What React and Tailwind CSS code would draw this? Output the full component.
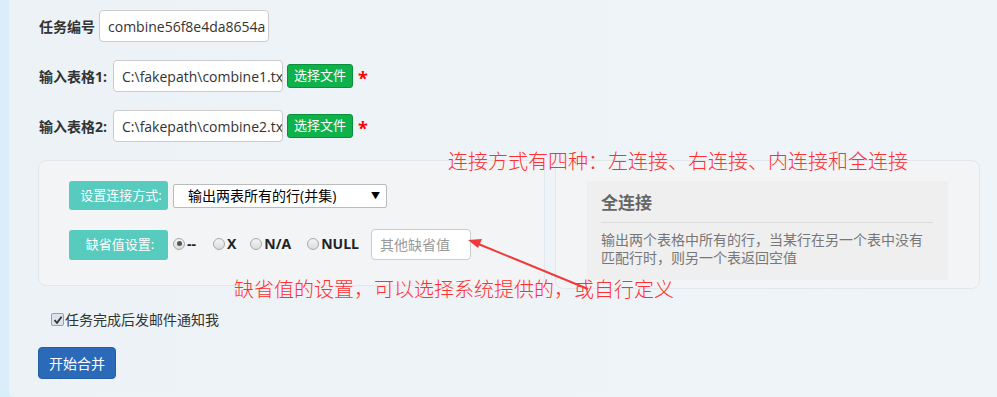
import React from 'react';

const font = { fontFamily: '"Open Sans", "Noto Sans CJK SC", sans-serif' };

function FileRow({ label, value }) {
  return (
    <div className="flex items-center h-[32px]">
      <span className="w-[74px] text-[14px] font-bold text-[#333]">{label}</span>
      <input
        readOnly
        value={value}
        className="w-[170px] h-[32px] bg-white border border-[#ccc] rounded-[4px] pl-[8px] text-[14px] text-[#333] outline-none"
      />
      <button className="ml-[4px] w-[66px] h-[24px] bg-[#0fb24a] border border-[#0a8f3a] rounded-[3px] text-white text-[13px] flex items-center justify-center">
        选择文件
      </button>
      <span className="ml-[5px] text-[#f00] text-[18px] font-bold leading-none mt-[4px]">*</span>
    </div>
  );
}

function Radio({ label, checked, className }) {
  return (
    <label className={`flex items-center ${className || ''}`}>
      <span className="w-[12px] h-[12px] rounded-full border border-[#a9a9a9] bg-gradient-to-b from-[#f4f4f4] to-[#dcdcdc] flex items-center justify-center">
        {checked && <span className="w-[5px] h-[5px] rounded-full bg-[#555]" />}
      </span>
      <span className="ml-[2px] text-[14px] font-bold text-[#222]">{label}</span>
    </label>
  );
}

export default function App() {
  return (
    <div className="w-[997px] h-[397px] flex bg-[#d9eef9] relative overflow-hidden" style={font}>
      <div className="w-[9px] shrink-0" />
      <div className="flex-1 bg-gradient-to-r from-[#edf2f6] to-[#eef4f8] rounded-bl-[6px] pl-[30px] pt-[10px]">
        <div className="flex items-center h-[32px]">
          <span className="w-[60px] text-[14px] font-bold text-[#333]">任务编号</span>
          <input
            readOnly
            value="combine56f8e4da8654a"
            className="w-[170px] h-[32px] bg-white border border-[#ccc] rounded-[4px] pl-[8px] text-[14px] text-[#333] outline-none"
          />
        </div>
        <div className="mt-[18px]">
          <FileRow label="输入表格1:" value="C:\fakepath\combine1.txt" />
        </div>
        <div className="mt-[18px]">
          <FileRow label="输入表格2:" value="C:\fakepath\combine2.txt" />
        </div>

        <div className="mt-[18px] -ml-[1px] flex gap-[10px]">
          <div className="w-[507px] h-[126px] border border-[#e2e7eb] rounded-[8px] bg-[#f2f4f6] pl-[30px] pt-[20px]">
            <div className="flex items-center">
              <div className="w-[99px] h-[29px] bg-[#56cbbe] rounded-[3px] text-white text-[13px] flex items-center justify-center pl-[5px]">
                设置连接方式:
              </div>
              <div className="ml-[5px] w-[214px] h-[24px] bg-white border border-[#bbb] rounded-[2px] flex items-center justify-between pl-[14px] pr-[6px] text-[14px] text-black">
                <span>输出两表所有的行(并集)</span>
                <span className="text-[9px]">▼</span>
              </div>
            </div>
            <div className="flex items-center mt-[19px]">
              <div className="w-[99px] h-[30px] bg-[#56cbbe] rounded-[3px] text-white text-[13px] flex items-center justify-center pl-[3px]">
                缺省值设置:
              </div>
              <div className="ml-[5px] flex items-center -mt-[2px]">
                <Radio label="--" checked />
                <Radio label="X" className="ml-[17px]" />
                <Radio label="N/A" className="ml-[14px]" />
                <Radio label="NULL" className="ml-[16px]" />
              </div>
              <div className="ml-[12px] w-[100px] h-[31px] bg-white border border-[#ccc] rounded-[4px] pl-[8px] flex items-center text-[14px] text-[#999]">
                其他缺省值
              </div>
            </div>
          </div>
          <div className="w-[425px] h-[129px] border border-[#e2e7eb] rounded-[8px] bg-[#f2f4f6] pl-[31px] pt-[20px]">
            <div className="w-[361px] h-[99px] bg-[#efefef] px-[14px] pt-[10px]">
              <div className="text-[17px] font-bold text-[#666] leading-[24px]">全连接</div>
              <div className="mt-[7px] border-t border-[#dcdcdc] w-[332px]" />
              <div className="mt-[8px] text-[14px] text-[#777] leading-[18px] whitespace-nowrap">
                <div>输出两个表格中所有的行，当某行在另一个表中没有</div>
                <div>匹配行时，则另一个表返回空值</div>
              </div>
            </div>
          </div>
        </div>

        <div className="mt-[20px] ml-[12px] flex items-center">
          <span className="w-[13px] h-[13px] border border-[#7aa7d8] rounded-[2px] bg-[#dde3ea] flex items-center justify-center">
            <svg width="10" height="10" viewBox="0 0 10 10">
              <path d="M1.5 5.2 L4 7.8 L8.6 1.8" stroke="#333" strokeWidth="1.8" fill="none" />
            </svg>
          </span>
          <span className="ml-[1px] text-[14px] text-[#333]">任务完成后发邮件通知我</span>
        </div>

        <button className="mt-[17px] -ml-[1px] w-[78px] h-[32px] bg-[#2a6ab8] border border-[#245ea5] rounded-[4px] text-white text-[14px]">
          开始合并
        </button>
      </div>

      <div className="absolute left-[448px] top-[148px] text-[20px] font-light text-[#ff3030] leading-[28px] whitespace-nowrap">
        连接方式有四种：左连接、右连接、内连接和全连接
      </div>
      <div className="absolute left-[234px] top-[276px] text-[20px] font-light text-[#ff3030] leading-[28px] whitespace-nowrap">
        缺省值的设置，可以选择系统提供的，或自行定义
      </div>
      <svg className="absolute left-0 top-0 pointer-events-none" width="997" height="397">
        <line x1="588" y1="289" x2="476" y2="243" stroke="#f03a3a" strokeWidth="2" />
        <polygon points="468,240 482,239 478,248" fill="#f03a3a" />
      </svg>
    </div>
  );
}
